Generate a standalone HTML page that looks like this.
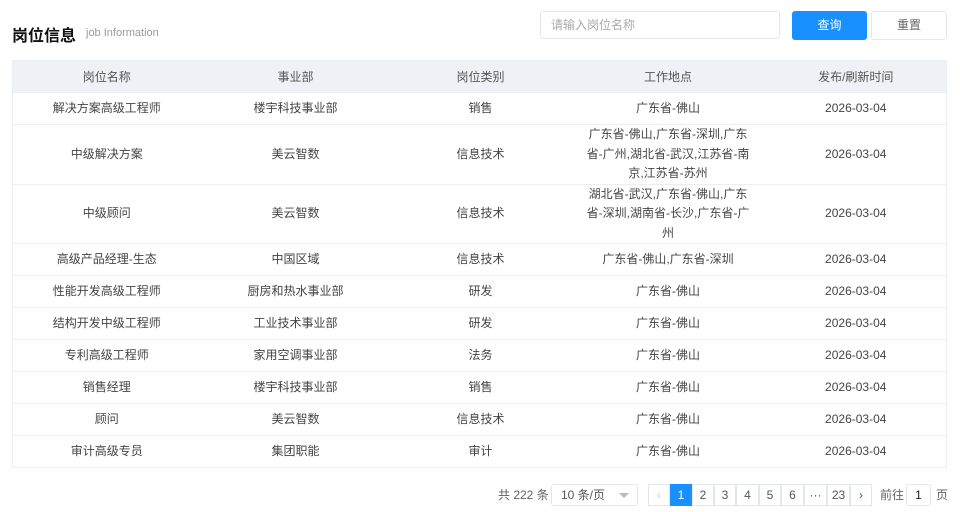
<!DOCTYPE html><html><head><meta charset="utf-8"><style>
body{margin:0;width:960px;height:512px;background:#fff;font-family:"Liberation Sans","Noto Sans CJK SC",sans-serif;color:#606266;font-size:12px;position:relative;overflow:hidden}
.t{position:absolute;left:12px;top:22px;font-size:16px;font-weight:bold;color:#111}
.st{position:absolute;left:86px;top:27px;font-size:11px;color:#999}
.inp{position:absolute;left:540px;top:11px;width:240px;height:28px;border:1px solid #e4e7ed;border-radius:3px;box-sizing:border-box;padding-left:10px;line-height:26px;color:#aaa;font-size:12px}
.b1{position:absolute;left:792px;top:11px;width:75px;height:29px;background:#1890ff;color:#fff;border-radius:3px;text-align:center;line-height:29px}
.b2{position:absolute;left:871px;top:11px;width:76px;height:29px;border:1px solid #e4e7ed;box-sizing:border-box;border-radius:3px;text-align:center;line-height:27px;color:#666}
table{position:absolute;left:12px;top:60px;width:934px;border-collapse:collapse;border:1px solid #ebeef5;table-layout:fixed}
th{background:#eef1f6;height:31px;font-weight:normal;color:#555;padding:0}
td{height:31px;border-top:1px solid #ebeef5;text-align:center;padding:0;color:#444;line-height:19.5px}
.w{width:166px;margin:0 auto;word-break:break-all}
.tall td{height:58px}
.pg{position:absolute;top:484px;height:22px;line-height:22px}
.bx{position:absolute;top:484px;height:22px;border:1px solid #e4e7ed;box-sizing:border-box;text-align:center;line-height:20px;color:#555}
</style></head><body>
<div class="t">岗位信息</div><div class="st">job Information</div>
<div class="inp">请输入岗位名称</div><div class="b1">查询</div><div class="b2">重置</div>
<table>
<colgroup><col style="width:188px"><col style="width:190px"><col style="width:180px"><col style="width:195px"><col style="width:181px"></colgroup>
<tr><th>岗位名称</th><th>事业部</th><th>岗位类别</th><th>工作地点</th><th>发布/刷新时间</th></tr>
<tr><td>解决方案高级工程师</td><td>楼宇科技事业部</td><td>销售</td><td>广东省-佛山</td><td>2026-03-04</td></tr>
<tr class="tall"><td>中级解决方案</td><td>美云智数</td><td>信息技术</td><td><div class="w">广东省-佛山,广东省-深圳,广东省-广州,湖北省-武汉,江苏省-南京,江苏省-苏州</div></td><td>2026-03-04</td></tr>
<tr class="tall"><td>中级顾问</td><td>美云智数</td><td>信息技术</td><td><div class="w">湖北省-武汉,广东省-佛山,广东省-深圳,湖南省-长沙,广东省-广州</div></td><td>2026-03-04</td></tr>
<tr><td>高级产品经理-生态</td><td>中国区域</td><td>信息技术</td><td>广东省-佛山,广东省-深圳</td><td>2026-03-04</td></tr>
<tr><td>性能开发高级工程师</td><td>厨房和热水事业部</td><td>研发</td><td>广东省-佛山</td><td>2026-03-04</td></tr>
<tr><td>结构开发中级工程师</td><td>工业技术事业部</td><td>研发</td><td>广东省-佛山</td><td>2026-03-04</td></tr>
<tr><td>专利高级工程师</td><td>家用空调事业部</td><td>法务</td><td>广东省-佛山</td><td>2026-03-04</td></tr>
<tr><td>销售经理</td><td>楼宇科技事业部</td><td>销售</td><td>广东省-佛山</td><td>2026-03-04</td></tr>
<tr><td>顾问</td><td>美云智数</td><td>信息技术</td><td>广东省-佛山</td><td>2026-03-04</td></tr>
<tr><td>审计高级专员</td><td>集团职能</td><td>审计</td><td>广东省-佛山</td><td>2026-03-04</td></tr>
</table>
<div class="pg" style="left:498px">共 222 条</div>
<div class="bx" style="left:551px;width:87px;text-align:left;padding-left:9px;border-radius:3px">10 条/页<span style="position:absolute;right:8px;top:8px;width:0;height:0;border-left:5px solid transparent;border-right:5px solid transparent;border-top:5px solid #bbb"></span></div>
<div class="bx" style="left:648px;width:22px;color:#ccc">‹</div>
<div class="bx" style="left:670px;width:22px;background:#1890ff;border-color:#1890ff;color:#fff">1</div>
<div class="bx" style="left:692px;width:22px">2</div>
<div class="bx" style="left:714px;width:22px">3</div>
<div class="bx" style="left:736px;width:23px">4</div>
<div class="bx" style="left:759px;width:22px">5</div>
<div class="bx" style="left:781px;width:23px">6</div>
<div class="bx" style="left:804px;width:23px">···</div>
<div class="bx" style="left:827px;width:23px">23</div>
<div class="bx" style="left:850px;width:22px">›</div>
<div class="pg" style="left:880px">前往</div>
<div class="bx" style="left:906px;width:25px;border-radius:3px;color:#222">1</div>
<div class="pg" style="left:936px">页</div>
</body></html>
